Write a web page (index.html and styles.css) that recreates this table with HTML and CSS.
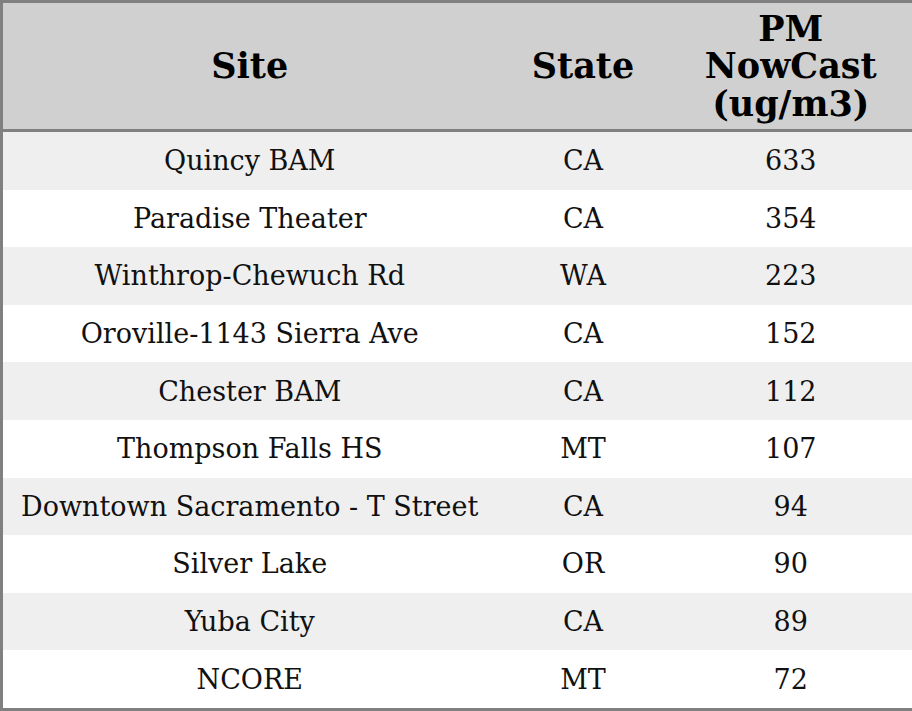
FILE: index.html
```html
<!DOCTYPE html>
<html>
<head>
<meta charset="utf-8">
<link rel="stylesheet" href="styles.css">
</head>
<body>
<table class="aq">
  <colgroup>
    <col class="c-site">
    <col class="c-state">
    <col class="c-pm">
  </colgroup>
  <thead>
    <tr><th>Site</th><th>State</th><th>PM<br>NowCast<br>(ug/m3)</th></tr>
  </thead>
  <tbody>
    <tr><td>Quincy BAM</td><td>CA</td><td>633</td></tr>
    <tr><td>Paradise Theater</td><td>CA</td><td>354</td></tr>
    <tr><td>Winthrop-Chewuch Rd</td><td>WA</td><td>223</td></tr>
    <tr><td>Oroville-1143 Sierra Ave</td><td>CA</td><td>152</td></tr>
    <tr><td>Chester BAM</td><td>CA</td><td>112</td></tr>
    <tr><td>Thompson Falls HS</td><td>MT</td><td>107</td></tr>
    <tr><td>Downtown Sacramento - T Street</td><td>CA</td><td>94</td></tr>
    <tr><td>Silver Lake</td><td>OR</td><td>90</td></tr>
    <tr><td>Yuba City</td><td>CA</td><td>89</td></tr>
    <tr><td>NCORE</td><td>MT</td><td>72</td></tr>
  </tbody>
</table>
</body>
</html>
```
FILE: styles.css
```css
html, body {
  margin: 0;
  padding: 0;
  background: #ffffff;
}
.aq {
  width: 912px;
  height: 711px;
  border-collapse: collapse;
  border: 3px solid #808080;
  font-family: "DejaVu Serif", serif;
  color: #000;
  table-layout: fixed;
}
.c-site { width: 495px; }
.c-state { width: 173px; }
.c-pm { width: 244px; }
.aq thead tr {
  background: #d0d0d0;
  height: 129px;
}
.aq th {
  font-size: 35px;
  font-weight: bold;
  line-height: 37.5px;
  text-align: center;
  padding: 0;
  border-bottom: 3px solid #808080;
}
.aq td {
  font-size: 27px;
  text-align: center;
  padding: 0;
  height: 57.6px;
  color: #111;
}
.aq tbody tr:nth-child(odd) { background: #efefef; }
.aq tbody tr:nth-child(even) { background: #ffffff; }
```
